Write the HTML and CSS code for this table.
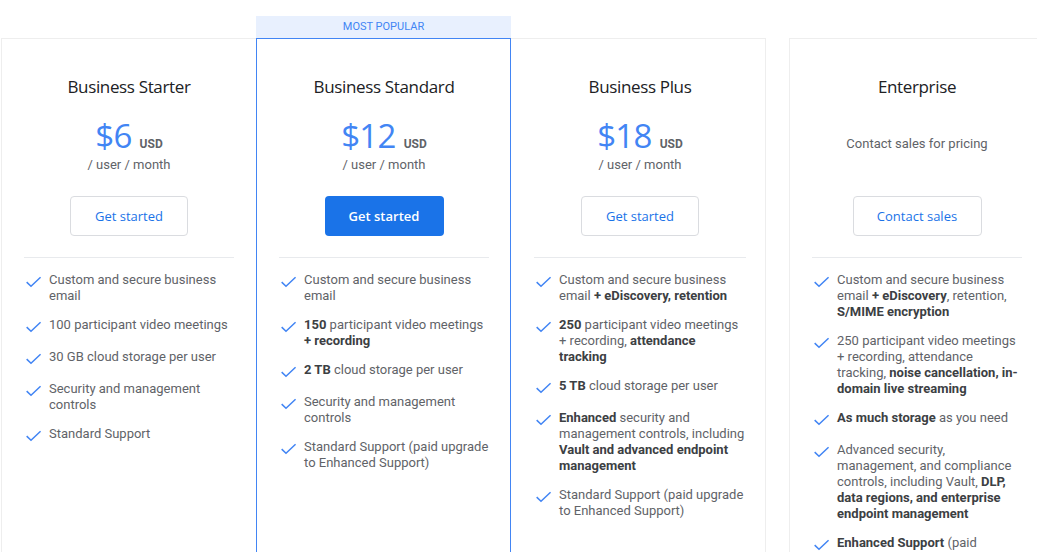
FILE: index.html
```html
<!DOCTYPE html>
<html lang="en">
<head>
<meta charset="utf-8">
<title>Google Workspace pricing</title>
<link rel="stylesheet" href="styles.css">
</head>
<body>
<svg width="0" height="0" class="defs" aria-hidden="true">
  <symbol id="chk" viewBox="0 0 18 18">
    <polyline points="3.2,9.6 7,13.2 16,4.8" fill="none" stroke="#4285f4" stroke-width="1.5" stroke-linecap="square" stroke-linejoin="miter"/>
  </symbol>
</svg>
<main class="plans">
  <section class="col">
    <div class="badge-slot"></div>
    <div class="card card-first">
      <h2 class="title">Business Starter</h2>
      <div class="price-block">
        <div class="price"><span class="amount">$6</span><span class="cur">USD</span></div>
        <div class="per">/ user / month</div>
      </div>
      <a class="btn btn-outline">Get started</a>
      <hr class="divider">
      <ul class="features">
        <li><svg class="ic"><use href="#chk"/></svg><span>Custom and secure business email</span></li>
        <li><svg class="ic"><use href="#chk"/></svg><span>100 participant video meetings</span></li>
        <li><svg class="ic"><use href="#chk"/></svg><span>30 GB cloud storage per user</span></li>
        <li><svg class="ic"><use href="#chk"/></svg><span>Security and management controls</span></li>
        <li><svg class="ic"><use href="#chk"/></svg><span>Standard Support</span></li>
      </ul>
    </div>
  </section>

  <section class="col">
    <div class="badge-slot"><div class="badge">MOST POPULAR</div></div>
    <div class="card card-featured">
      <h2 class="title">Business Standard</h2>
      <div class="price-block">
        <div class="price"><span class="amount">$12</span><span class="cur">USD</span></div>
        <div class="per">/ user / month</div>
      </div>
      <a class="btn btn-filled">Get started</a>
      <hr class="divider">
      <ul class="features">
        <li><svg class="ic"><use href="#chk"/></svg><span>Custom and secure business email</span></li>
        <li><svg class="ic"><use href="#chk"/></svg><span><b>150</b> participant video meetings <b>+ recording</b></span></li>
        <li><svg class="ic"><use href="#chk"/></svg><span><b>2 TB</b> cloud storage per user</span></li>
        <li><svg class="ic"><use href="#chk"/></svg><span>Security and management controls</span></li>
        <li><svg class="ic"><use href="#chk"/></svg><span>Standard Support (paid upgrade to Enhanced Support)</span></li>
      </ul>
    </div>
  </section>

  <section class="col">
    <div class="badge-slot"></div>
    <div class="card card-third">
      <h2 class="title">Business Plus</h2>
      <div class="price-block">
        <div class="price"><span class="amount">$18</span><span class="cur">USD</span></div>
        <div class="per">/ user / month</div>
      </div>
      <a class="btn btn-outline">Get started</a>
      <hr class="divider">
      <ul class="features">
        <li><svg class="ic"><use href="#chk"/></svg><span>Custom and secure business email <b>+ eDiscovery, retention</b></span></li>
        <li><svg class="ic"><use href="#chk"/></svg><span><b>250</b> participant video meetings + recording, <b>attendance tracking</b></span></li>
        <li><svg class="ic"><use href="#chk"/></svg><span><b>5 TB</b> cloud storage per user</span></li>
        <li><svg class="ic"><use href="#chk"/></svg><span><b>Enhanced</b> security and management controls, including <b>Vault and advanced endpoint management</b></span></li>
        <li><svg class="ic"><use href="#chk"/></svg><span>Standard Support (paid upgrade to Enhanced Support)</span></li>
      </ul>
    </div>
  </section>

  <section class="col col-ent">
    <div class="badge-slot"></div>
    <div class="card card-ent">
      <h2 class="title">Enterprise</h2>
      <div class="price-block price-contact">
        <div class="contact">Contact sales for pricing</div>
      </div>
      <a class="btn btn-outline btn-wide">Contact sales</a>
      <hr class="divider">
      <ul class="features">
        <li><svg class="ic"><use href="#chk"/></svg><span>Custom and secure business email <b>+ eDiscovery</b>, retention, <b>S/MIME encryption</b></span></li>
        <li><svg class="ic"><use href="#chk"/></svg><span>250 participant video meetings + recording, attendance tracking, <b>noise cancellation, in-domain live streaming</b></span></li>
        <li><svg class="ic"><use href="#chk"/></svg><span><b>As much storage</b> as you need</span></li>
        <li><svg class="ic"><use href="#chk"/></svg><span>Advanced security, management, and compliance controls, including Vault, <b>DLP, data regions, and enterprise endpoint management</b></span></li>
        <li><svg class="ic"><use href="#chk"/></svg><span><b>Enhanced Support</b> (paid upgrade to Premium Support)</span></li>
      </ul>
    </div>
  </section>
</main>
</body>
</html>
```

FILE: styles.css
```css
html, body {
  margin: 0;
  padding: 0;
  background: #ffffff;
  overflow: hidden;
}

body {
  font-family: Roboto, "Liberation Sans", Arial, sans-serif;
  color: #5f6368;
}

.defs {
  position: absolute;
  width: 0;
  height: 0;
}

.plans {
  display: flex;
  align-items: stretch;
  padding: 16px 0 0 1px;
}

.col {
  flex: 0 0 255px;
  width: 255px;
  display: flex;
  flex-direction: column;
}

.col-ent {
  margin-left: 23px;
}

.badge-slot {
  height: 22px;
}

.badge {
  height: 22px;
  background: #e8f0fe;
  color: #4285f4;
  font-size: 11px;
  line-height: 22px;
  text-align: center;
}

.card {
  flex: 1;
  min-height: 560px;
  box-sizing: border-box;
  border: 1px solid #eeeeee;
  padding: 0 21px 0 22px;
  display: flex;
  flex-direction: column;
  align-items: center;
}

.card-first {
  border-right: none;
  padding-right: 22px;
}

.card-featured {
  border: 1px solid #4285f4;
}

.card-third {
  border-left: none;
  padding-left: 23px;
  padding-right: 19px;
}

.title {
  margin: 36px 0 0;
  font-family: "Open Sans", Roboto, sans-serif;
  font-weight: 400;
  font-size: 17px;
  line-height: 24px;
  color: #202124;
  letter-spacing: -0.35px;
}

.price-block {
  margin-top: 19px;
  height: 56px;
  text-align: center;
}

.price {
  height: 36px;
  display: flex;
  align-items: baseline;
  justify-content: center;
}

.amount {
  font-family: "Open Sans", Roboto, sans-serif;
  font-size: 33px;
  line-height: 36px;
  color: #4285f4;
  letter-spacing: -0.7px;
}

.cur {
  margin-left: 8px;
  font-size: 12px;
  font-weight: 700;
  color: #5f6368;
}

.per {
  margin-top: 1px;
  font-size: 13px;
  line-height: 19px;
  color: #5f6368;
}

.price-contact {
  padding-top: 16px;
  box-sizing: border-box;
}

.contact {
  font-size: 13px;
  line-height: 20px;
  color: #5f6368;
}

.btn {
  margin-top: 22px;
  box-sizing: border-box;
  height: 40px;
  display: inline-flex;
  align-items: center;
  justify-content: center;
  width: 118px;
  border-radius: 4px;
  font-family: "Open Sans", Roboto, sans-serif;
  font-size: 13px;
  font-weight: 500;
  cursor: pointer;
}

.btn-outline {
  border: 1px solid #dadce0;
  color: #1a73e8;
  background: #ffffff;
}

.btn-filled {
  width: 119px;
  background: #1a73e8;
  color: #ffffff;
  font-weight: 600;
}

.btn-wide {
  width: 129px;
}

.divider {
  align-self: stretch;
  margin: 21px 0 0;
  border: none;
  border-top: 1px solid #e8eaed;
  height: 0;
}

.features {
  align-self: stretch;
  list-style: none;
  margin: 0;
  padding: 14px 0 0;
}

.features li {
  display: flex;
  align-items: flex-start;
  gap: 7px;
  min-height: 19px;
  margin-bottom: 13px;
  font-size: 13px;
  line-height: 16px;
  color: #5f6368;
}

.features b {
  font-weight: 700;
  color: #3c4043;
}

.ic {
  flex: 0 0 18px;
  width: 18px;
  height: 18px;
  margin-top: 1px;
}
```
